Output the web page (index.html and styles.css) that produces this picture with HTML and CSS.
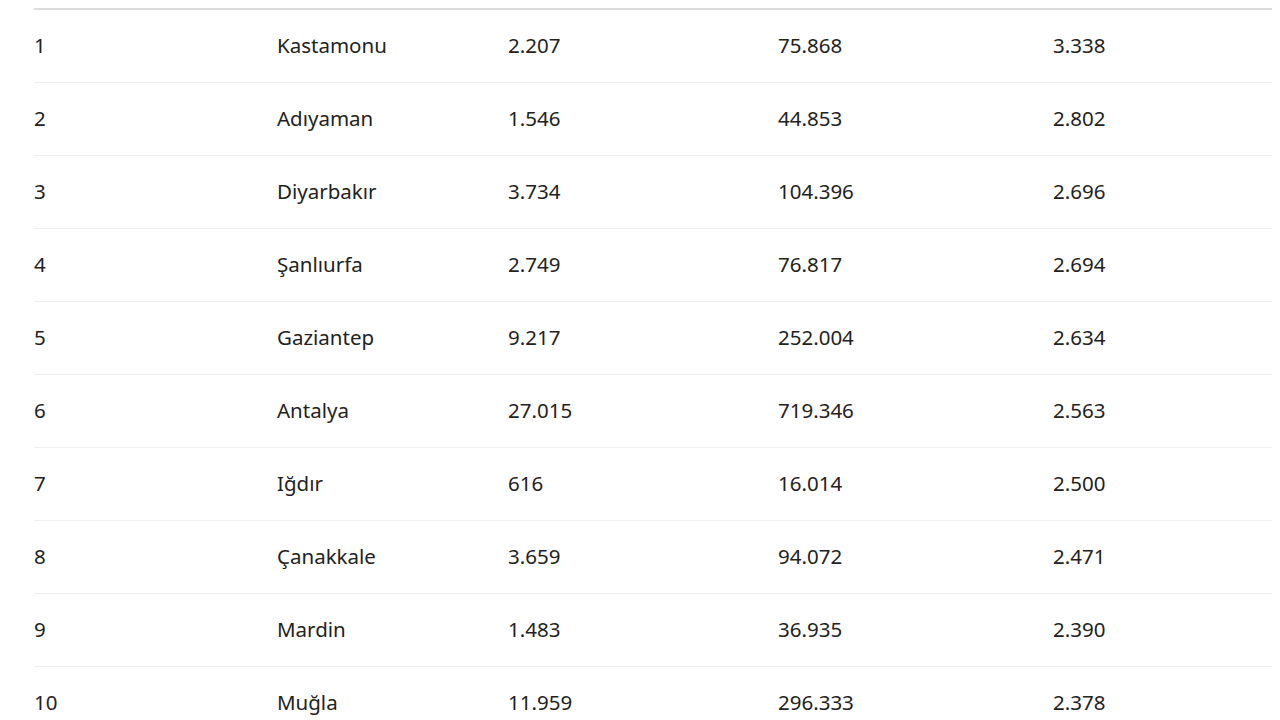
FILE: index.html
```html
<!DOCTYPE html>
<html lang="tr">
<head>
<meta charset="utf-8">
<link rel="stylesheet" href="styles.css">
</head>
<body>
<table class="rank">
<colgroup><col class="c1"><col class="c2"><col class="c3"><col class="c4"><col class="c5"></colgroup>
<tbody>
<tr><td>1</td><td>Kastamonu</td><td>2.207</td><td>75.868</td><td>3.338</td></tr>
<tr><td>2</td><td>Adıyaman</td><td>1.546</td><td>44.853</td><td>2.802</td></tr>
<tr><td>3</td><td>Diyarbakır</td><td>3.734</td><td>104.396</td><td>2.696</td></tr>
<tr><td>4</td><td>Şanlıurfa</td><td>2.749</td><td>76.817</td><td>2.694</td></tr>
<tr><td>5</td><td>Gaziantep</td><td>9.217</td><td>252.004</td><td>2.634</td></tr>
<tr><td>6</td><td>Antalya</td><td>27.015</td><td>719.346</td><td>2.563</td></tr>
<tr><td>7</td><td>Iğdır</td><td>616</td><td>16.014</td><td>2.500</td></tr>
<tr><td>8</td><td>Çanakkale</td><td>3.659</td><td>94.072</td><td>2.471</td></tr>
<tr><td>9</td><td>Mardin</td><td>1.483</td><td>36.935</td><td>2.390</td></tr>
<tr><td>10</td><td>Muğla</td><td>11.959</td><td>296.333</td><td>2.378</td></tr>
</tbody>
</table>
</body>
</html>
```
FILE: styles.css
```css
html, body {
  margin: 0;
  padding: 0;
  background: #ffffff;
}
body {
  font-family: "Noto Sans", "Open Sans", sans-serif;
  color: #222222;
  font-size: 20.5px;
  overflow: hidden;
}
.rank {
  margin: 8px 0 0 34px;
  width: 1238px;
  border-collapse: collapse;
  table-layout: fixed;
  border-top: 2px solid #dcdcdc;
}
.c1 { width: 243px; }
.c2 { width: 231px; }
.c3 { width: 270px; }
.c4 { width: 275px; }
.c5 { width: 219px; }
.rank td {
  height: 70px;
  padding: 0 0 2px 0;
  vertical-align: middle;
  border-bottom: 1px solid #efefef;
  white-space: nowrap;
}
```
